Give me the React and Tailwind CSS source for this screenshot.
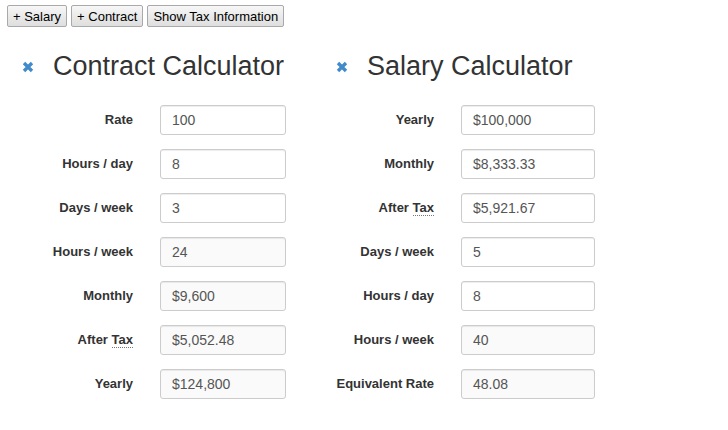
import React from "react";

const contractRows = [
  { label: "Rate", value: "100" },
  { label: "Hours / day", value: "8" },
  { label: "Days / week", value: "3" },
  { label: "Hours / week", value: "24", readOnly: true },
  { label: "Monthly", value: "$9,600", readOnly: true },
  { label: "After Tax", value: "$5,052.48", readOnly: true, abbr: true },
  { label: "Yearly", value: "$124,800", readOnly: true },
];

const salaryRows = [
  { label: "Yearly", value: "$100,000" },
  { label: "Monthly", value: "$8,333.33" },
  { label: "After Tax", value: "$5,921.67", abbr: true },
  { label: "Days / week", value: "5" },
  { label: "Hours / day", value: "8" },
  { label: "Hours / week", value: "40", readOnly: true },
  { label: "Equivalent Rate", value: "48.08", readOnly: true },
];

function RemoveIcon() {
  return (
    <svg width="12" height="12" viewBox="0 0 12 12" className="shrink-0 mt-[2px]">
      <path d="M2 2 L10 10 M10 2 L2 10" stroke="#428bca" strokeWidth="3.4" strokeLinecap="butt" />
    </svg>
  );
}

function Label({ row }) {
  if (!row.abbr) return row.label;
  return (
    <>
      After{" "}
      <span className="border-b border-dotted border-[#777]">Tax</span>
    </>
  );
}

function Calculator({ title, rows, labelWidth, inputWidth }) {
  return (
    <div className="flex flex-col">
      <div className="flex items-center h-[36px] pl-[7px]">
        <RemoveIcon />
        <h1 className="ml-[19px] text-[27px] leading-none text-[#333]">{title}</h1>
      </div>
      <div className="flex flex-col gap-[14px] mt-[21px]">
        {rows.map((row) => (
          <div key={row.label} className="flex items-center gap-[27px]">
            <label className={`${labelWidth} text-right text-[13px] font-bold text-[#333]`}>
              <Label row={row} />
            </label>
            <input
              readOnly
              value={row.value}
              className={`${inputWidth} h-[30px] px-[11px] text-[14px] text-[#555] border border-[#ccc] rounded-[3px] shadow-[inset_0_1px_1px_rgba(0,0,0,0.075)] outline-none ${
                row.readOnly ? "bg-[#fafafa]" : "bg-white"
              }`}
            />
          </div>
        ))}
      </div>
    </div>
  );
}

function Btn({ children }) {
  return (
    <button className="h-[22px] px-[5px] text-[13px] text-black border border-[#a9a9a9] rounded-[2px] bg-gradient-to-b from-[#f7f7f7] to-[#dedede] leading-none">
      {children}
    </button>
  );
}

export default function App() {
  return (
    <div className="w-[728px] h-[430px] bg-white font-['Liberation_Sans',Arial,sans-serif]">
      <div className="flex gap-[4px] pl-[7px] pt-[5px]">
        <Btn>+ Salary</Btn>
        <Btn>+ Contract</Btn>
        <Btn>Show Tax Information</Btn>
      </div>
      <div className="flex mt-[21px] pl-[15px]">
        <div className="w-[314px]">
          <Calculator
            title="Contract Calculator"
            rows={contractRows}
            labelWidth="w-[118px]"
            inputWidth="w-[126px]"
          />
        </div>
        <div>
          <Calculator
            title="Salary Calculator"
            rows={salaryRows}
            labelWidth="w-[105px]"
            inputWidth="w-[134px]"
          />
        </div>
      </div>
    </div>
  );
}
